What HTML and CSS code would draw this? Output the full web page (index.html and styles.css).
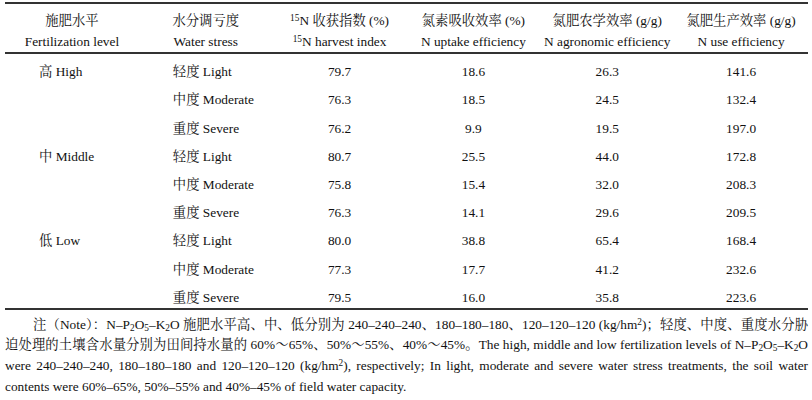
FILE: index.html
```html
<!DOCTYPE html>
<html lang="zh">
<head>
<meta charset="utf-8">
<title>Table</title>
<link rel="stylesheet" href="styles.css">
</head>
<body>
<div class="page">
  <table class="data">
    <thead>
      <tr>
        <th>施肥水平<br>Fertilization level</th>
        <th>水分调亏度<br>Water stress</th>
        <th><sup>15</sup>N 收获指数 (%)<br><sup>15</sup>N harvest index</th>
        <th>氮素吸收效率 (%)<br>N uptake efficiency</th>
        <th>氮肥农学效率 (g/g)<br>N agronomic efficiency</th>
        <th>氮肥生产效率 (g/g)<br>N use efficiency</th>
      </tr>
    </thead>
    <tbody>
      <tr><td class="txt">高 High</td><td class="txt">轻度 Light</td><td>79.7</td><td>18.6</td><td>26.3</td><td>141.6</td></tr>
      <tr><td class="txt"></td><td class="txt">中度 Moderate</td><td>76.3</td><td>18.5</td><td>24.5</td><td>132.4</td></tr>
      <tr><td class="txt"></td><td class="txt">重度 Severe</td><td>76.2</td><td>9.9</td><td>19.5</td><td>197.0</td></tr>
      <tr><td class="txt">中 Middle</td><td class="txt">轻度 Light</td><td>80.7</td><td>25.5</td><td>44.0</td><td>172.8</td></tr>
      <tr><td class="txt"></td><td class="txt">中度 Moderate</td><td>75.8</td><td>15.4</td><td>32.0</td><td>208.3</td></tr>
      <tr><td class="txt"></td><td class="txt">重度 Severe</td><td>76.3</td><td>14.1</td><td>29.6</td><td>209.5</td></tr>
      <tr><td class="txt">低 Low</td><td class="txt">轻度 Light</td><td>80.0</td><td>38.8</td><td>65.4</td><td>168.4</td></tr>
      <tr><td class="txt"></td><td class="txt">中度 Moderate</td><td>77.3</td><td>17.7</td><td>41.2</td><td>232.6</td></tr>
      <tr><td class="txt"></td><td class="txt">重度 Severe</td><td>79.5</td><td>16.0</td><td>35.8</td><td>223.6</td></tr>
    </tbody>
  </table>
  <div class="note">
    <p class="ln first">注（Note）：N–P<sub>2</sub>O<sub>5</sub>–K<sub>2</sub>O 施肥水平高、中、低分别为 240–240–240、180–180–180、120–120–120 (kg/hm<sup>2</sup>)；轻度、中度、重度水分胁</p>
    <p class="ln">迫处理的土壤含水量分别为田间持水量的 60%～65%、50%～55%、40%～45%。The high, middle and low fertilization levels of N–P<sub>2</sub>O<sub>5</sub>–K<sub>2</sub>O</p>
    <p class="ln">were 240–240–240, 180–180–180 and 120–120–120 (kg/hm<sup>2</sup>), respectively; In light, moderate and severe water stress treatments, the soil water</p>
    <p class="end">contents were 60%–65%, 50%–55% and 40%–45% of field water capacity.</p>
  </div>
</div>
</body>
</html>
```

FILE: styles.css
```css
html, body {
  margin: 0;
  padding: 0;
  background: #ffffff;
}

body {
  font-family: "Liberation Serif", "Noto Serif CJK SC", "Noto Sans CJK SC", serif;
  font-size: 13.33px;
  color: #111111;
}

.page {
  padding: 2px 4px 0 5px;
  width: 803px;
}

.data {
  width: 803px;
  table-layout: fixed;
  border-collapse: collapse;
  border-top: 2px solid #333333;
  border-bottom: 2px solid #333333;
}

.data thead tr {
  border-bottom: 2px solid #333333;
}

.data th {
  font-weight: normal;
  text-align: center;
  line-height: 21px;
  padding: 6px 0 0;
  white-space: nowrap;
}

.data td {
  text-align: center;
  line-height: 16px;
  padding: 10.2px 0 2px;
  white-space: nowrap;
}

.data td.txt {
  text-align: left;
  padding-left: 34px;
}

sup, sub {
  font-size: 70%;
  line-height: 0;
}

sup {
  vertical-align: 0.45em;
}

sub {
  vertical-align: -0.25em;
}

.note {
  margin-top: 5px;
  line-height: 20.8px;
}

.note p {
  margin: 0;
  white-space: nowrap;
}

.note .ln {
  text-align: justify;
  text-align-last: justify;
}

.note .first {
  text-indent: 28px;
}

.note .end {
  text-align: left;
}
```
